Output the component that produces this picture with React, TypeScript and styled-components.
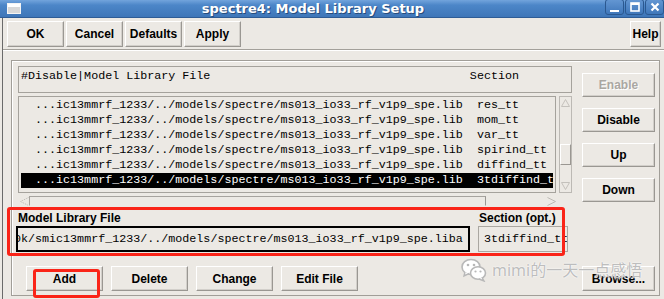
import React from 'react';
import styled, { createGlobalStyle } from 'styled-components';

const bg = '#ece9e4';
const line = '#a5a29c';
const mono = `'Liberation Mono', 'DejaVu Sans Mono', monospace`;

const GlobalStyle = createGlobalStyle`
	html, body {
		margin: 0;
		padding: 0;
		background: ${bg};
	}
	body {
		width: 664px;
		height: 299px;
		overflow: hidden;
	}
`;

const Window = styled.div`
	position: relative;
	width: 664px;
	height: 299px;
	overflow: hidden;
	background: ${bg};
	font-family: 'Liberation Sans', Arial, sans-serif;
	color: #000;
`;

const TitleBar = styled.div`
	height: 18px;
	box-sizing: border-box;
	display: flex;
	align-items: center;
	background: linear-gradient(#72a4dc 0%, #4c86c8 30%, #3e76b8 100%);
	border-bottom: 1px solid #2e5c95;
`;

const TitleIcon = styled.svg`
	margin-left: 7px;
	width: 14px;
	height: 11px;
	flex: none;
`;

const TitleText = styled.div`
	flex: 1;
	text-align: center;
	color: #fff;
	font-family: 'DejaVu Sans', Verdana, sans-serif;
	font-weight: bold;
	font-size: 13px;
	line-height: 17px;
	text-shadow: 1px 1px 0 #274c7c;
`;

const WinButtons = styled.div`
	display: flex;
	gap: 1px;
	align-self: flex-start;
	margin-top: -1px;
`;

const WinButton = styled.div`
	width: 19px;
	height: 16px;
	box-sizing: border-box;
	border: 1px solid #2b5890;
	border-radius: 3px;
	background: linear-gradient(#6396d2, #3f77ba);
	display: flex;
	align-items: center;
	justify-content: center;
`;

const Body = styled.div`
	margin-left: 2px;
	border-left: 1px solid #6a6a6a;
	height: 281px;
`;

const Toolbar = styled.div`
	display: flex;
	gap: 2px;
	padding: 3px 3px 0 4px;
`;

const Button = styled.div<{ $w: number; $h?: number; $disabled?: boolean }>`
	width: ${p => p.$w}px;
	height: ${p => p.$h ?? 26}px;
	box-sizing: border-box;
	flex: none;
	display: flex;
	align-items: center;
	justify-content: center;
	background: ${bg};
	border: 1px solid;
	border-color: #ffffff #9a9792 #9a9792 #ffffff;
	box-shadow: inset -1px -1px 0 #d2cfca;
	font-weight: bold;
	font-size: 12px;
	color: ${p => (p.$disabled ? '#aaa7a2' : '#000')};
	text-shadow: ${p => (p.$disabled ? '1px 1px 0 #fff' : 'none')};
`;

const HelpButton = styled(Button)`
	margin-left: auto;
`;

const Separator = styled.div`
	margin-top: 2px;
	height: 2px;
	box-sizing: border-box;
	border-top: 1px solid #a3a09a;
	border-bottom: 1px solid #fff;
`;

const Frame = styled.div`
	margin: 9px 0 0 8px;
	width: 649px;
	box-sizing: border-box;
	border: 1px solid #a19e98;
	box-shadow: inset 1px 1px 0 #fff;
	padding: 5px 4px 4px 6px;
`;

const Upper = styled.div`
	display: flex;
	gap: 10px;
`;

const ListArea = styled.div`
	width: 554px;
	display: flex;
	flex-direction: column;
`;

const HeaderBox = styled.div`
	height: 27px;
	box-sizing: border-box;
	border: 1px solid ${line};
	padding: 2px 2px 0;
	font-family: ${mono};
	font-size: 11.7px;
	line-height: 15px;
	white-space: pre;
	overflow: hidden;
`;

const ListRow = styled.div`
	display: flex;
	gap: 3px;
	margin-top: 3px;
`;

const ListBox = styled.div`
	width: 538px;
	height: 97px;
	box-sizing: border-box;
	border: 1px solid ${line};
	padding: 1px 2px;
	overflow: hidden;
`;

const Row = styled.div<{ $selected?: boolean }>`
	height: 15px;
	line-height: 15px;
	font-family: ${mono};
	font-size: 11.7px;
	white-space: pre;
	overflow: hidden;
	background: ${p => (p.$selected ? '#000' : 'transparent')};
	color: ${p => (p.$selected ? '#fff' : '#000')};
`;

const VScroll = styled.div`
	width: 13px;
	height: 97px;
	box-sizing: border-box;
	border: 1px solid #bcb9b4;
	display: flex;
	flex-direction: column;
`;

const ArrowCell = styled.div<{ $h: number }>`
	height: ${p => p.$h}px;
	flex: none;
	display: flex;
	align-items: center;
	justify-content: center;
`;

const VTrack = styled.div`
	flex: 1;
`;

const VThumb = styled.div`
	margin-top: 36px;
	height: 21px;
	box-sizing: border-box;
	border: 1px solid;
	border-color: #fff #9a9792 #9a9792 #fff;
	box-shadow: 0 0 0 0;
`;

const HScroll = styled.div`
	margin: 3px 0 0 2px;
	width: 536px;
	height: 10px;
	display: flex;
	align-items: stretch;
`;

const HThumb = styled.div`
	width: 457px;
	box-sizing: border-box;
	border: 1px solid;
	border-color: #a6a39e #9a9792 transparent #a6a39e;
`;

const HSpacer = styled.div`
	flex: 1;
`;

const SideButtons = styled.div`
	width: 73px;
	padding-top: 7px;
	display: flex;
	flex-direction: column;
	gap: 11px;
`;

const Fields = styled.div`
	margin: 5px 0 0 -2px;
	display: grid;
	grid-template-columns: 454px 90px;
	column-gap: 8px;
	row-gap: 1px;
`;

const Label = styled.div<{ $pad: number }>`
	height: 14px;
	line-height: 14px;
	padding-left: ${p => p.$pad}px;
	font-weight: bold;
	font-size: 12px;
	white-space: nowrap;
`;

const ModelField = styled.div`
	height: 26px;
	box-sizing: border-box;
	border: 2px solid #000;
	overflow: hidden;
	white-space: pre;
	font-family: ${mono};
	font-size: 11.7px;
	line-height: 22px;
`;

const ScrolledText = styled.span`
	display: inline-block;
	margin-left: -4px;
`;

const SectionField = styled.div`
	height: 26px;
	box-sizing: border-box;
	border: 1px solid #aaa7a1;
	padding-left: 5px;
	overflow: hidden;
	white-space: pre;
	font-family: ${mono};
	font-size: 11.7px;
	line-height: 24px;
`;

const Caret = styled.span`
	display: inline-block;
	width: 1px;
	height: 13px;
	background: #000;
	vertical-align: middle;
	margin-left: -6px;
`;

const BottomRow = styled.div`
	margin-top: 14px;
	display: flex;
	gap: 8px;
	padding-left: 8px;
`;

const BrowseButton = styled(Button)`
	margin-left: auto;
`;

const FieldHighlight = styled.div`
	position: absolute;
	left: 7px;
	top: 207px;
	width: 558px;
	height: 49px;
	box-sizing: border-box;
	border: 3px solid #fa2418;
	border-radius: 3px;
	pointer-events: none;
`;

const AddHighlight = styled.div`
	position: absolute;
	left: 33px;
	top: 269px;
	width: 67px;
	height: 29px;
	box-sizing: border-box;
	border: 3px solid #fa2418;
	border-radius: 3px;
	pointer-events: none;
`;

const Watermark = styled.div`
	position: absolute;
	left: 461px;
	top: 258px;
	display: flex;
	align-items: center;
	gap: 5px;
	pointer-events: none;
`;

const WatermarkText = styled.span`
	font-family: 'Noto Sans', 'Noto Sans CJK SC', sans-serif;
	font-size: 16px;
	line-height: 22px;
	color: #bdbdbd;
	text-shadow: 0 0 2px #fff, 0 0 1px #fff;
`;

const rows = [
	'res_tt',
	'mom_tt',
	'var_tt',
	'spirind_tt',
	'diffind_tt',
	'3tdiffind_tt',
];
const path = '...ic13mmrf_1233/../models/spectre/ms013_io33_rf_v1p9_spe.lib';

const UpArrow = () => (
	<svg width="9" height="8" viewBox="0 0 9 8">
		<path d="M4.5 0.5 L8.5 7.5 L0.5 7.5 Z" fill="none" stroke="#c4c1bc" strokeWidth="1" />
	</svg>
);
const DownArrow = () => (
	<svg width="9" height="8" viewBox="0 0 9 8">
		<path d="M0.5 0.5 L8.5 0.5 L4.5 7.5 Z" fill="none" stroke="#c4c1bc" strokeWidth="1" />
	</svg>
);
const LeftArrow = () => (
	<svg width="9" height="9" viewBox="0 0 9 9">
		<path d="M8.5 0.5 L0.5 4.5 L8.5 8.5" fill="none" stroke="#bdbab5" strokeWidth="1" strokeDasharray="1 1" />
	</svg>
);
const RightArrow = () => (
	<svg width="9" height="9" viewBox="0 0 9 9">
		<path d="M0.5 0.5 L8.5 4.5 L0.5 8.5" fill="none" stroke="#bdbab5" strokeWidth="1" />
	</svg>
);

const WeChat = () => (
	<svg width="26" height="24" viewBox="0 0 26 24">
		<ellipse cx="10" cy="9" rx="9" ry="7.5" fill="#fff" stroke="#b8b8b8" strokeWidth="1.6" />
		<path d="M4 14 L3 18 L8 15.5" fill="#fff" stroke="#b8b8b8" strokeWidth="1.4" />
		<circle cx="7" cy="7" r="1.3" fill="#b8b8b8" />
		<circle cx="13" cy="7" r="1.3" fill="#b8b8b8" />
		<ellipse cx="17" cy="15" rx="7.5" ry="6.3" fill="#fff" stroke="#b8b8b8" strokeWidth="1.6" />
		<path d="M21 19.5 L23 23 L18 21" fill="#fff" stroke="#b8b8b8" strokeWidth="1.4" />
		<circle cx="14.5" cy="13.5" r="1.1" fill="#b8b8b8" />
		<circle cx="19.5" cy="13.5" r="1.1" fill="#b8b8b8" />
	</svg>
);

const App = () => {
	return (
		<Window>
			<GlobalStyle />
			<TitleBar>
				<TitleIcon viewBox="0 0 14 11">
					<rect x="0.5" y="0.5" width="13" height="10" fill="#d8d8d8" stroke="#f4f4f4" />
					<rect x="1" y="1" width="12" height="3" fill="#ffffff" />
				</TitleIcon>
				<TitleText>spectre4: Model Library Setup</TitleText>
				<WinButtons>
					<WinButton>
						<svg width="9" height="9" viewBox="0 0 9 9">
							<rect x="0" y="7" width="9" height="2" fill="#fff" />
						</svg>
					</WinButton>
					<WinButton>
						<svg width="10" height="10" viewBox="0 0 10 10">
							<rect x="1" y="1" width="8" height="8" fill="none" stroke="#fff" strokeWidth="1.6" />
							<rect x="1" y="1" width="8" height="2" fill="#fff" />
						</svg>
					</WinButton>
					<WinButton>
						<svg width="10" height="10" viewBox="0 0 10 10">
							<path d="M1.5 1.5 L8.5 8.5 M8.5 1.5 L1.5 8.5" stroke="#fff" strokeWidth="2.2" />
						</svg>
					</WinButton>
				</WinButtons>
			</TitleBar>
			<Body>
				<Toolbar>
					<Button $w={57}>OK</Button>
					<Button $w={57}>Cancel</Button>
					<Button $w={57}>Defaults</Button>
					<Button $w={57}>Apply</Button>
					<HelpButton $w={31}>Help</HelpButton>
				</Toolbar>
				<Separator />
				<Frame>
					<Upper>
						<ListArea>
							<HeaderBox>{'#Disable|Model Library File' + ' '.repeat(37) + 'Section'}</HeaderBox>
							<ListRow>
								<ListBox>
									{rows.map((s, i) => (
										<Row key={s} $selected={i === rows.length - 1}>
											{'  ' + path + '  ' + s}
										</Row>
									))}
								</ListBox>
								<VScroll>
									<ArrowCell $h={11}>
										<UpArrow />
									</ArrowCell>
									<VTrack>
										<VThumb />
									</VTrack>
									<ArrowCell $h={12}>
										<DownArrow />
									</ArrowCell>
								</VScroll>
							</ListRow>
							<HScroll>
								<ArrowCell $h={10}>
									<LeftArrow />
								</ArrowCell>
								<HThumb />
								<HSpacer />
								<ArrowCell $h={10}>
									<RightArrow />
								</ArrowCell>
							</HScroll>
						</ListArea>
						<SideButtons>
							<Button $w={73} $h={24} $disabled>
								Enable
							</Button>
							<Button $w={73} $h={24}>
								Disable
							</Button>
							<Button $w={73} $h={24}>
								Up
							</Button>
							<Button $w={73} $h={24}>
								Down
							</Button>
						</SideButtons>
					</Upper>
					<Fields>
						<Label $pad={2}>Model Library File</Label>
						<Label $pad={1}>Section (opt.)</Label>
						<ModelField>
							<ScrolledText>0k/smic13mmrf_1233/../models/spectre/ms013_io33_rf_v1p9_spe.liba</ScrolledText>
						</ModelField>
						<SectionField>
							3tdiffind_tt
							<Caret />
						</SectionField>
					</Fields>
					<BottomRow>
						<Button $w={77} $h={25}>
							Add
						</Button>
						<Button $w={77} $h={25}>
							Delete
						</Button>
						<Button $w={77} $h={25}>
							Change
						</Button>
						<Button $w={77} $h={25}>
							Edit File
						</Button>
						<BrowseButton $w={73} $h={25}>
							Browse...
						</BrowseButton>
					</BottomRow>
				</Frame>
			</Body>
			<FieldHighlight />
			<AddHighlight />
			<Watermark>
				<WeChat />
				<WatermarkText>mimi的一天一点感悟</WatermarkText>
			</Watermark>
		</Window>
	);
};

export default App;
